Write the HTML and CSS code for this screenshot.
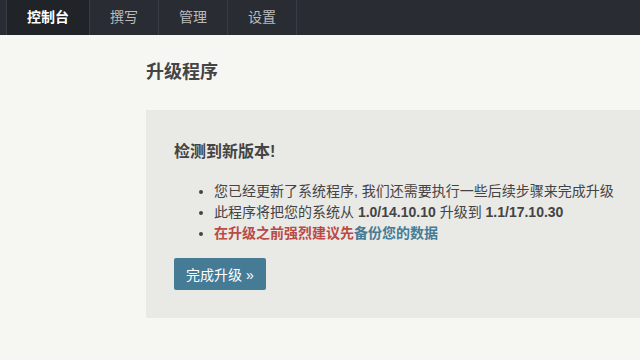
FILE: index.html
```html
<!DOCTYPE html>
<html lang="zh-CN">
<head>
    <meta charset="UTF-8">
    <meta name="viewport" content="width=device-width, initial-scale=1.0">
    <title>升级程序</title>
    <link rel="stylesheet" href="styles.css">
</head>
<body>

    <nav class="head-nav">
        <a class="nav-item active" href="#">控制台</a>
        <a class="nav-item" href="#">撰写</a>
        <a class="nav-item" href="#">管理</a>
        <a class="nav-item" href="#">设置</a>
    </nav>

    <div class="main">
        <h2 class="page-title">升级程序</h2>

        <div class="notice">
            <h3>检测到新版本!</h3>
            <ul>
                <li>您已经更新了系统程序, 我们还需要执行一些后续步骤来完成升级</li>
                <li>此程序将把您的系统从 <strong>1.0/14.10.10</strong> 升级到 <strong>1.1/17.10.30</strong></li>
                <li><strong class="warning">在升级之前强烈建议先<a href="#">备份您的数据</a></strong></li>
            </ul>
            <button class="btn-primary">完成升级 &raquo;</button>
        </div>
    </div>

</body>
</html>
```

FILE: styles.css
```css
:root {
    --nav-bg: #292d33;
    --nav-active: #202328;
    --nav-border: #383d45;
    --bg: #f6f6f3;
    --panel: #e9e9e6;
    --text: #444;
    --primary: #467b96;
    --warning: #b94a48;
}

body {
    font-family: 'Liberation Sans', 'Noto Sans CJK SC', sans-serif;
    font-size: 14px;
    background: var(--bg);
    color: var(--text);
    margin: 0;
}

.head-nav {
    display: flex;
    height: 35px;
    padding-left: 6px;
    background: var(--nav-bg);
}

.nav-item {
    display: block;
    padding: 0 20px;
    line-height: 35px;
    color: #bbb;
    text-decoration: none;
    border-right: 1px solid var(--nav-border);
}

.nav-item:first-child {
    border-left: 1px solid var(--nav-border);
}

.nav-item.active {
    background: var(--nav-active);
    color: #fff;
    font-weight: bold;
}

.main {
    padding-left: 146px;
}

.page-title {
    font-size: 18px;
    line-height: 24px;
    font-weight: bold;
    margin: 25px 0 26px;
}

.notice {
    background: var(--panel);
    padding: 30px 28px 28px;
}

.notice h3 {
    font-size: 16px;
    line-height: 24px;
    margin: 0 0 17px;
}

.notice ul {
    margin: 0 0 14px;
    padding-left: 40px;
    line-height: 21px;
}

.notice li {
    white-space: nowrap;
}

.warning {
    color: var(--warning);
}

.warning a {
    color: var(--primary);
    text-decoration: none;
}

.btn-primary {
    height: 32px;
    padding: 0 12px;
    border: none;
    border-radius: 2px;
    background: var(--primary);
    color: #fff;
    font-family: inherit;
    font-size: 14px;
    cursor: pointer;
}
```
